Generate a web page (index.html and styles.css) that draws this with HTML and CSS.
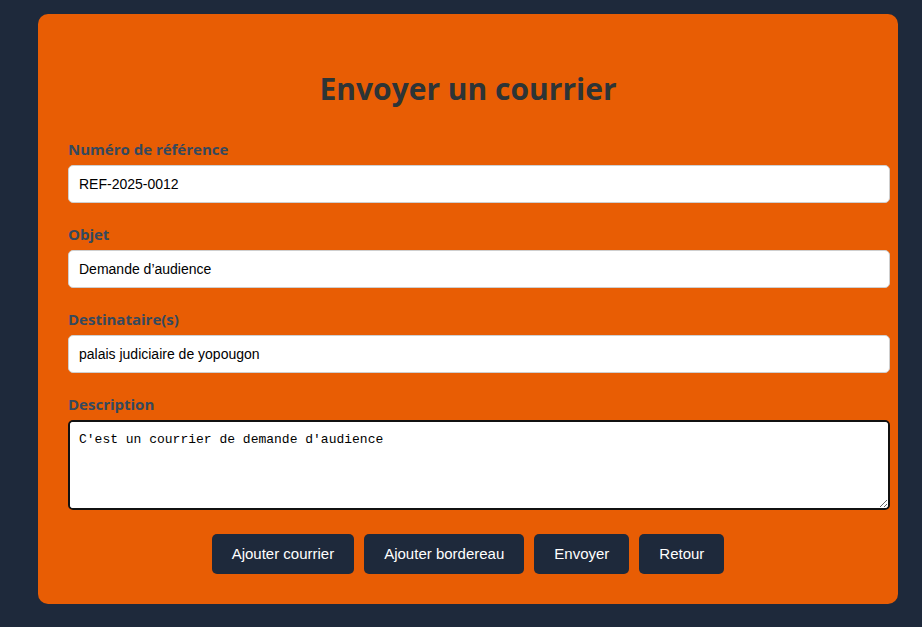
FILE: index.html
```html
<!DOCTYPE html>
<html lang="fr">
<head>
<meta charset="utf-8">
<title>Envoyer un courrier</title>
<link rel="stylesheet" href="styles.css">
</head>
<body>
<main class="card">
  <h2 class="title">Envoyer un courrier</h2>
  <form class="form">
    <div class="group">
      <label class="label" for="ref">Numéro de référence</label>
      <input class="input" id="ref" type="text" value="REF-2025-0012">
    </div>
    <div class="group">
      <label class="label" for="obj">Objet</label>
      <input class="input" id="obj" type="text" value="Demande d’audience">
    </div>
    <div class="group">
      <label class="label" for="dest">Destinataire(s)</label>
      <input class="input" id="dest" type="text" value="palais judiciaire de yopougon">
    </div>
    <div class="group">
      <label class="label" for="desc">Description</label>
      <textarea class="textarea" id="desc">C'est un courrier de demande d'audience</textarea>
    </div>
    <div class="actions">
      <button type="button" class="btn">Ajouter courrier</button>
      <button type="button" class="btn">Ajouter bordereau</button>
      <button type="button" class="btn">Envoyer</button>
      <button type="button" class="btn">Retour</button>
    </div>
  </form>
</main>
</body>
</html>
```
FILE: styles.css
```css
html, body {
  margin: 0;
  padding: 0;
  background: #1e293b;
  height: 100%;
}
body {
  padding: 14px 24px 0 38px;
  box-sizing: border-box;
  font-family: "Open Sans", "Liberation Sans", sans-serif;
}
.card {
  background: #e85d04;
  border-radius: 10px;
  padding: 30px;
  width: 860px;
  box-sizing: border-box;
}
.title {
  margin: 25px 0 30px;
  text-align: center;
  font-size: 30px;
  line-height: 40px;
  font-weight: 700;
  color: #2d3436;
}
.form {
  display: flex;
  flex-direction: column;
}
.group {
  display: flex;
  flex-direction: column;
  align-items: flex-start;
  margin-bottom: 21px;
}
.label {
  font-size: 15px;
  line-height: 20px;
  font-weight: 700;
  color: #34495e;
  margin-bottom: 6px;
}
.input {
  width: 100%;
  height: 36px;
  box-sizing: content-box;
  border: 1px solid #cfcfcf;
  border-radius: 5px;
  padding: 0 10px;
  font-family: "Liberation Sans", Arial, sans-serif;
  font-size: 14px;
  color: #000;
  background: #fff;
}
.textarea {
  width: 100%;
  height: 66px;
  box-sizing: content-box;
  border: 2px solid #111;
  border-radius: 5px;
  padding: 10px 9px 10px 9px;
  font-family: "Liberation Mono", monospace;
  font-size: 13px;
  color: #000;
  background: #fff;
  outline: 1px solid #fff;
  outline-offset: -3px;
}
.actions {
  display: flex;
  justify-content: center;
  gap: 10px;
  margin-top: 3px;
}
.btn {
  background: #1e293b;
  color: #fff;
  border: none;
  border-radius: 5px;
  padding: 11px 20px;
  font-family: "Liberation Sans", Arial, sans-serif;
  font-size: 15px;
  line-height: 18px;
  cursor: pointer;
}
```
